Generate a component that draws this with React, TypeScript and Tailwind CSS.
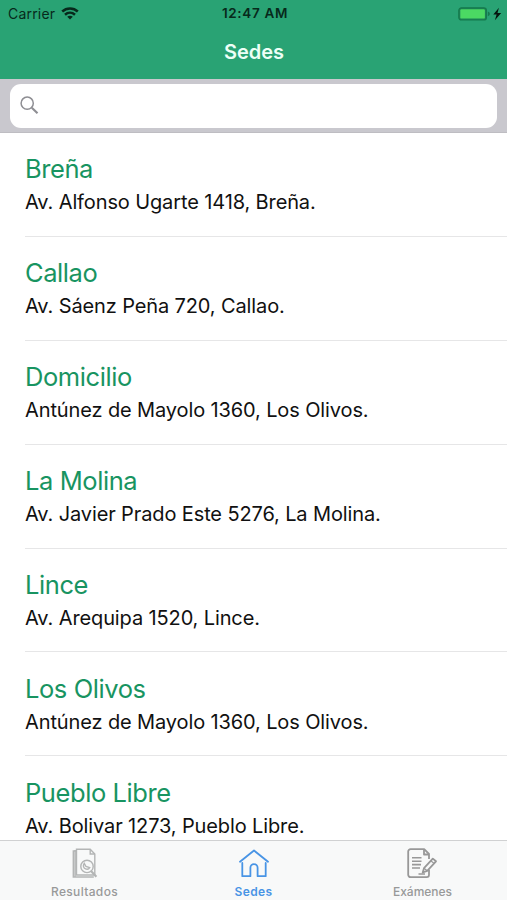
const sites = [
  { name: 'Breña', address: 'Av. Alfonso Ugarte 1418, Breña.' },
  { name: 'Callao', address: 'Av. Sáenz Peña 720, Callao.' },
  { name: 'Domicilio', address: 'Antúnez de Mayolo 1360, Los Olivos.' },
  { name: 'La Molina', address: 'Av. Javier Prado Este 5276, La Molina.' },
  { name: 'Lince', address: 'Av. Arequipa 1520, Lince.' },
  { name: 'Los Olivos', address: 'Antúnez de Mayolo 1360, Los Olivos.' },
  { name: 'Pueblo Libre', address: 'Av. Bolivar 1273, Pueblo Libre.' },
];

function WifiIcon() {
  return (
    <svg width="18" height="13" viewBox="0 0 18 13" fill="none" stroke="#07291b" strokeWidth="2.5">
      <path d="M1.2 4.5C5.6.4 12.4.4 16.8 4.5" />
      <path d="M4 7.7C6.9 5.1 11.1 5.1 14 7.7" />
      <path d="M9 12.6 6.2 9.8C7.8 8.4 10.2 8.4 11.8 9.8Z" fill="#07291b" stroke="none" />
    </svg>
  );
}

function BatteryIcon() {
  return (
    <svg width="44" height="14" viewBox="0 0 44 14">
      <rect x="0.8" y="0.8" width="27.6" height="12.2" rx="2.6" fill="#1d8257" stroke="#157a4c" strokeWidth="1.2" />
      <rect x="2.3" y="2.2" width="24.6" height="9.4" rx="1.2" fill="#4bd963" />
      <path d="M29.8 4.6c1.5.5 2 1.3 2 2.3s-.5 1.8-2 2.3z" fill="#157a4c" />
      <path d="M40.9.8 35.3 7.5h3.3L36.9 13.2l6.3-7.3h-3.7z" fill="#06150e" />
    </svg>
  );
}

function ResultsIcon() {
  return (
    <svg width="26" height="31" viewBox="0 0 26 31" fill="none" stroke="#b3b5b5" strokeWidth="1.4">
      <path d="M4.5 3H1.3v26h20.5" />
      <path d="M3 29V2M4.5 1.2h13.7l4.6 4.8v21H4.5z" />
      <path d="M18.2 1.2V6h4.6" />
      <circle cx="15" cy="18.4" r="6.2" />
      <path d="M12.2 15.3c-1.5 2.1-.8 4.8 1.4 5.6 1.6.6 3.4-.1 4.1-1.3l-3.7-1.1z" />
      <path d="m19 23 5.4 5.8" strokeWidth="2.2" />
    </svg>
  );
}

function HomeIcon() {
  return (
    <svg width="32" height="29" viewBox="0 0 32 29" fill="none" stroke="#4894e5" strokeWidth="1.8" strokeLinecap="round" strokeLinejoin="round">
      <path d="M2 12.7 16 1.5l14 11.2" />
      <path d="M4.3 14v13.2h8.1v-8.4a3.6 3.6 0 0 1 7.2 0v8.4h8.1V14" />
    </svg>
  );
}

function ExamsIcon() {
  return (
    <svg width="31" height="32" viewBox="0 0 31 32" fill="none" stroke="#989898" strokeWidth="1.8" strokeLinejoin="round">
      <path d="M22 11V6l-4.8-4.8H3.6a2.4 2.4 0 0 0-2.4 2.4v23.2a2.4 2.4 0 0 0 2.4 2.4h16a2.4 2.4 0 0 0 2.4-2.4v-5" />
      <path d="M17 1.5v5h5" />
      <path d="M5 9.8h9.5M5 13.2h9.5M5 16.6h9M5 20h8M11.5 26h6.5" strokeWidth="1.6" />
      <path d="m17 20.2 8.8-9.6 3.2 2.7-8.8 9.5-4.5 1.7z" />
      <path d="m23.8 12.7 3.2 2.7M17 20.2l3.2 2.6" strokeWidth="1.2" />
    </svg>
  );
}

export default function App() {
  return (
    <div className="flex h-[900px] w-[507px] flex-col overflow-hidden bg-white font-['Inter','Liberation_Sans',sans-serif]">
      <header className="h-[79px] shrink-0 bg-[#29a374]">
        <div className="grid h-[27px] grid-cols-3 items-center pl-2 pr-[5px]">
          <div className="flex items-center gap-[6px] text-[14px] tracking-[0.2px] text-[#07291b]">
            <span>Carrier</span>
            <WifiIcon />
          </div>
          <span className="text-center text-[13.5px] font-semibold tracking-[0.65px] text-[#07291b]">12:47 AM</span>
          <div className="flex justify-end"><BatteryIcon /></div>
        </div>
        <h1 className="pt-[10px] pl-px text-center text-[20px] leading-[30px] font-semibold text-[#edfff7]">Sedes</h1>
      </header>

      <div className="h-[54px] shrink-0 border-b border-[#bebdc2] bg-[#c9c8ce] px-[10px] pt-[5px]">
        <div className="flex h-[44px] items-center rounded-[11px] bg-white pb-px pl-[10px]">
          <svg width="19" height="19" viewBox="0 0 19 19" fill="none" stroke="#8e8e93">
            <circle cx="7.2" cy="7.2" r="6.1" strokeWidth="1.5" />
            <path d="m11.8 11.8 5.7 5.4" strokeWidth="2.2" />
          </svg>
        </div>
      </div>

      <main className="min-h-0 flex-1 overflow-hidden pl-[25px]">
        {sites.map((site) => (
          <section key={site.name} className="h-[103.9px] border-b border-[#e6e6e7] pt-[20.2px]">
            <h2 className="text-[25.5px] leading-[32px] tracking-[-0.42px] text-[#189461]">{site.name}</h2>
            <p className="pt-[3px] text-[20px] leading-[28px] tracking-[-0.12px] text-[#111]">{site.address}</p>
          </section>
        ))}
      </main>

      <nav className="grid h-[60px] shrink-0 grid-cols-3 border-t border-[#d0d1d2] bg-[#f8f9f9] text-[12px] font-medium tracking-[0.35px] text-[#989999]">
        <div className="flex flex-col items-center pt-[7px]">
          <div className="h-[36px]"><ResultsIcon /></div>
          <span className="leading-[16px]">Resultados</span>
        </div>
        <div className="flex flex-col items-center pt-[8px] text-[#4894e5]">
          <div className="h-[35px]"><HomeIcon /></div>
          <span className="leading-[16px] font-semibold">Sedes</span>
        </div>
        <div className="flex flex-col items-center pt-[7px]">
          <div className="h-[36px]"><ExamsIcon /></div>
          <span className="leading-[16px] tracking-normal">Exámenes</span>
        </div>
      </nav>
    </div>
  );
}
